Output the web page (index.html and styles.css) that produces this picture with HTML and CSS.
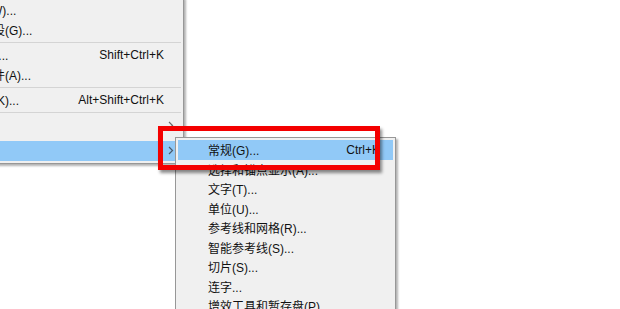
FILE: index.html
```html
<!DOCTYPE html>
<html lang="zh-CN">
<head>
    <meta charset="UTF-8">
    <title>编辑 - 首选项</title>
    <link rel="stylesheet" href="styles.css">
</head>
<body>
    <div class="screen">
        <div class="menu edit-menu">
            <div class="item"><span class="label">SWF 预设(W)...</span><span class="key"></span><span class="arrow"></span></div>
            <div class="item"><span class="label">透视网格预设(G)...</span><span class="key"></span><span class="arrow"></span></div>
            <div class="sep"></div>
            <div class="item"><span class="label">颜色设置(G)...</span><span class="key">Shift+Ctrl+K</span><span class="arrow"></span></div>
            <div class="item"><span class="label">指定配置文件(A)...</span><span class="key"></span><span class="arrow"></span></div>
            <div class="sep"></div>
            <div class="item"><span class="label">键盘快捷键(K)...</span><span class="key">Alt+Shift+Ctrl+K</span><span class="arrow"></span></div>
            <div class="sep"></div>
            <div class="item"><span class="label">我的设置</span><span class="key"></span>
                <span class="arrow"><svg width="6" height="9" viewBox="0 0 6 9"><path d="M1 1 L4.5 4.5 L1 8" fill="none" stroke="#6b6b6b" stroke-width="1.2"/></svg></span>
            </div>
            <div class="item active last"><span class="label">首选项(N)</span><span class="key"></span>
                <span class="arrow"><svg width="6" height="9" viewBox="0 0 6 9"><path d="M1 1 L4.5 4.5 L1 8" fill="none" stroke="#4a5a6a" stroke-width="1.2"/></svg></span>
            </div>
        </div>

        <div class="menu submenu">
            <div class="item active"><span class="label">常规(G)...</span><span class="key">Ctrl+K</span></div>
            <div class="item"><span class="label">选择和锚点显示(A)...</span><span class="key"></span></div>
            <div class="item"><span class="label">文字(T)...</span><span class="key"></span></div>
            <div class="item"><span class="label">单位(U)...</span><span class="key"></span></div>
            <div class="item"><span class="label">参考线和网格(R)...</span><span class="key"></span></div>
            <div class="item"><span class="label">智能参考线(S)...</span><span class="key"></span></div>
            <div class="item"><span class="label">切片(S)...</span><span class="key"></span></div>
            <div class="item"><span class="label">连字...</span><span class="key"></span></div>
            <div class="item"><span class="label">增效工具和暂存盘(P)...</span><span class="key"></span></div>
            <div class="item"><span class="label">用户界面(I)...</span><span class="key"></span></div>
        </div>

        <div class="highlight-box"></div>
    </div>
</body>
</html>
```

FILE: styles.css
```css
body {
    margin: 0;
    background-color: #fff;
    font-family: "Liberation Sans", "Noto Sans CJK SC", sans-serif;
    font-size: 12px;
    color: #111;
}
.screen {
    position: relative;
    width: 620px;
    height: 309px;
    overflow: hidden;
}
.menu {
    box-sizing: border-box;
    background-color: #f0f0f0;
    border: 1px solid #979797;
    padding: 2px;
    box-shadow: 2px 2px 2px rgba(0, 0, 0, 0.3);
}
.item {
    display: flex;
    align-items: center;
    height: 19.5px;
    white-space: nowrap;
}
.item.active {
    background-color: #91c9f7;
}
.label {
    flex: 1;
}
.key {
    text-align: right;
}
.sep {
    height: 6px;
    display: flex;
    align-items: center;
}
.sep::after {
    content: "";
    flex: 1;
    height: 1px;
    background-color: #d4d4d4;
}
.edit-menu {
    width: 284px;
    margin-left: -100px;
    margin-top: -3px;
}
.edit-menu .item {
    padding-left: 30px;
}
.edit-menu .item.last {
    margin-top: 5.5px;
    height: 20px;
}
.edit-menu .arrow {
    width: 17px;
    padding-left: 4px;
    box-sizing: border-box;
    display: flex;
    align-items: center;
}
.submenu {
    position: absolute;
    left: 175px;
    top: 137px;
    width: 221px;
    height: 240px;
}
.submenu .item {
    padding-left: 30px;
    padding-right: 13px;
}
.highlight-box {
    position: absolute;
    left: 158px;
    top: 126px;
    width: 222px;
    height: 44px;
    box-sizing: border-box;
    border: 5px solid #f40000;
    box-shadow: 2px 3px 3px rgba(0, 0, 0, 0.45);
}
```
